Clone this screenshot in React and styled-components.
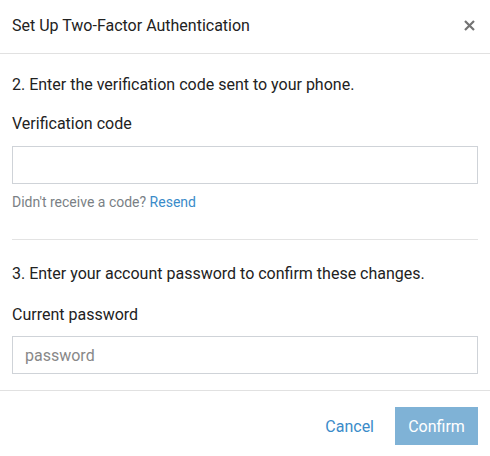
import styled, { createGlobalStyle } from "styled-components";

const Global = createGlobalStyle`
  body {
    margin: 0;
    background: #fff;
    font-family: Roboto, "Liberation Sans", sans-serif;
    color: #222;
  }
`

const Modal = styled.div`
  width: 490px;
  height: 456px;
  display: flex;
  flex-direction: column;
`

const Header = styled.div`
  height: 54px;
  display: flex;
  align-items: center;
  justify-content: space-between;
  padding: 0 14px 3px 12px;
  box-sizing: border-box;
  border-bottom: 1px solid #e1e1e1;
`

const Title = styled.div`
  font-size: 16px;
  color: #222;
`

const Close = styled.button`
  border: none;
  background: none;
  padding: 0;
  width: 14px;
  height: 14px;
  display: flex;
  align-items: center;
  justify-content: center;
  cursor: pointer;
`

const Body = styled.div`
  padding: 21px 12px 0;
`

const Step = styled.div`
  font-size: 16px;
  line-height: 20px;
  color: #222;
`

const Label = styled.div`
  font-size: 16px;
  line-height: 20px;
  color: #222;
  margin-top: ${p => p.$top}px;
  margin-bottom: ${p => p.$bottom}px;
`

const Input = styled.input`
  display: block;
  width: 100%;
  height: 38px;
  box-sizing: border-box;
  border: 1px solid #cfd3d8;
  padding: 0 12px;
  font-family: inherit;
  font-size: 16px;
  color: #222;
  outline: none;
  &::placeholder {
    color: #888;
  }
`

const Help = styled.div`
  font-size: 14px;
  line-height: 18px;
  color: #7a7f85;
  margin-top: 9px;
`

const Link = styled.a`
  color: #3a8bc9;
  text-decoration: none;
  cursor: pointer;
`

const Divider = styled.hr`
  border: none;
  border-top: 1px solid #e3e3e3;
  margin: 28px 0 24px;
`

const Footer = styled.div`
  margin-top: 16px;
  border-top: 1px solid #e1e1e1;
  padding: 16px 12px 0;
  display: flex;
  justify-content: flex-end;
  align-items: center;
  gap: 21px;
`

const TextButton = styled.button`
  border: none;
  background: none;
  padding: 0;
  font-family: inherit;
  font-size: 16px;
  color: #3a8bc9;
  cursor: pointer;
`

const PrimaryButton = styled.button`
  width: 83px;
  height: 38px;
  border: none;
  background: #7fb2d6;
  color: #fff;
  font-family: inherit;
  font-size: 16px;
  cursor: pointer;
`

const App = () => {
  return (
    <Modal>
      <Global />
      <Header>
        <Title>Set Up Two-Factor Authentication</Title>
        <Close aria-label="Close">
          <svg width="11" height="11" viewBox="0 0 11 11">
            <path d="M1 1L10 10M10 1L1 10" stroke="#737373" strokeWidth="2.2" />
          </svg>
        </Close>
      </Header>
      <Body>
        <Step>2. Enter the verification code sent to your phone.</Step>
        <Label $top={19} $bottom={12}>Verification code</Label>
        <Input type="text" />
        <Help>
          Didn't receive a code? <Link>Resend</Link>
        </Help>
        <Divider />
        <Step>3. Enter your account password to confirm these changes.</Step>
        <Label $top={21} $bottom={11}>Current password</Label>
        <Input type="password" placeholder="password" />
      </Body>
      <Footer>
        <TextButton>Cancel</TextButton>
        <PrimaryButton>Confirm</PrimaryButton>
      </Footer>
    </Modal>
  );
};

export default App;
